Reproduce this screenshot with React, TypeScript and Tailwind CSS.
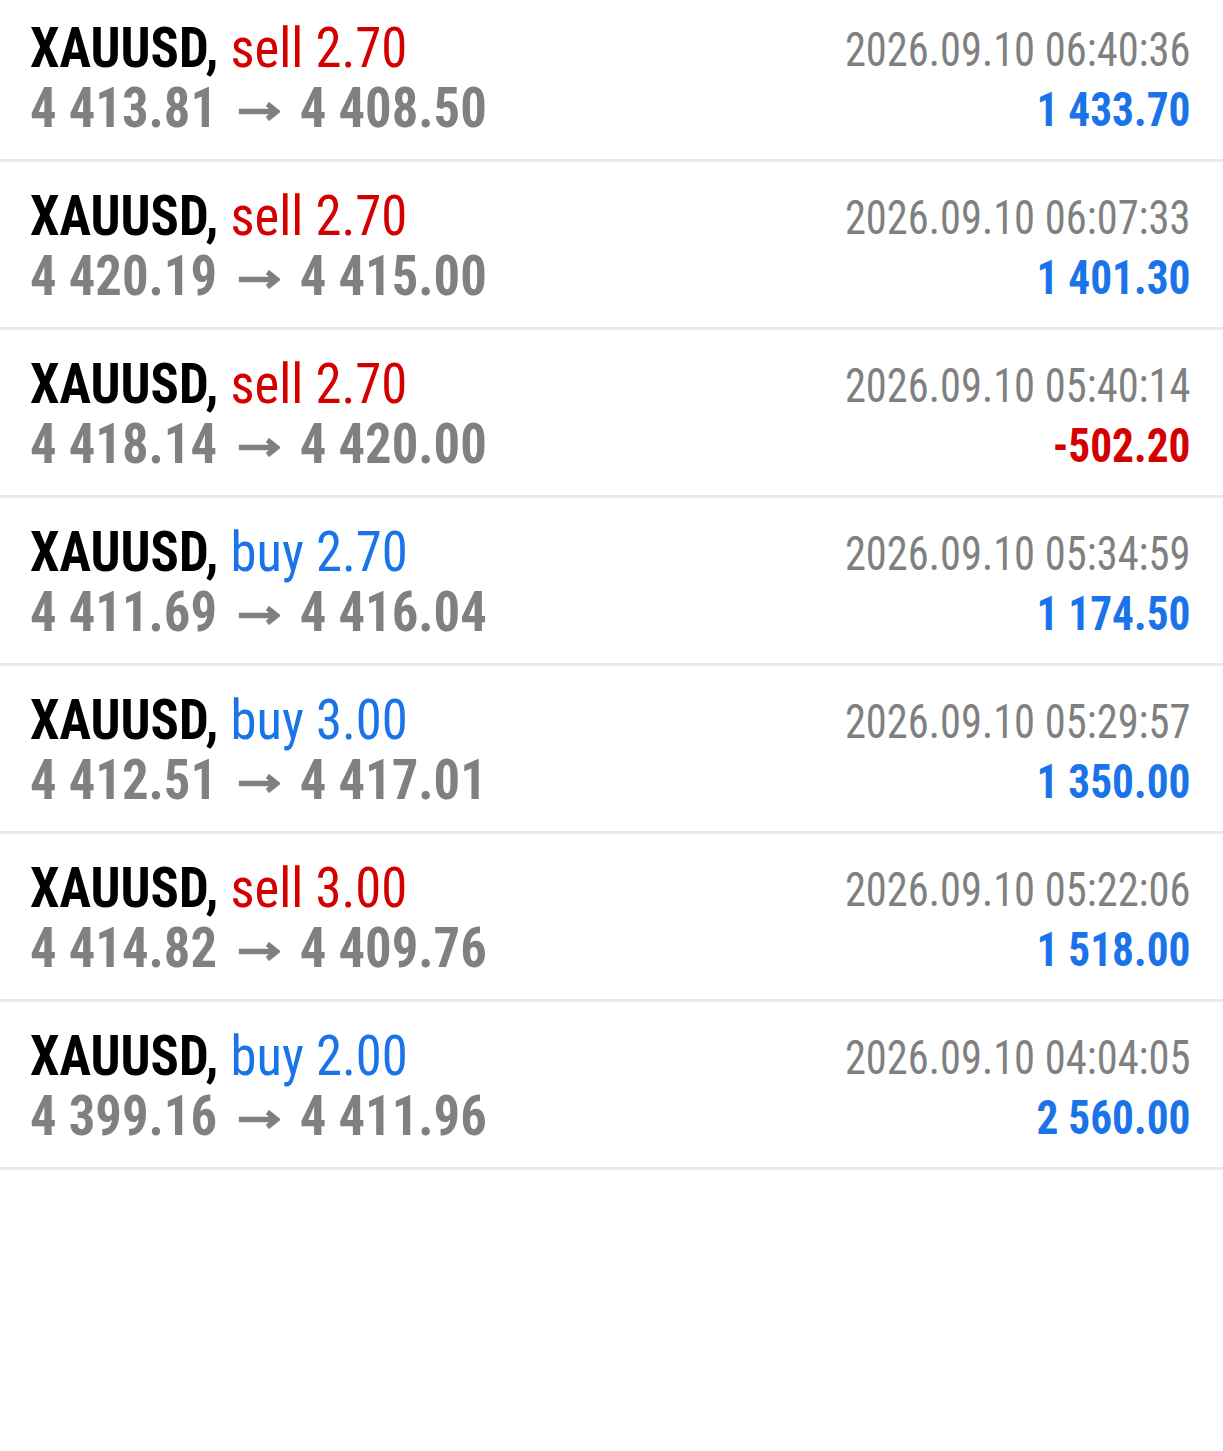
const trades = [
  { side: 'sell', vol: '2.70', open: '4 413.81', close: '4 408.50', time: '2026.09.10 06:40:36', profit: '1 433.70' },
  { side: 'sell', vol: '2.70', open: '4 420.19', close: '4 415.00', time: '2026.09.10 06:07:33', profit: '1 401.30' },
  { side: 'sell', vol: '2.70', open: '4 418.14', close: '4 420.00', time: '2026.09.10 05:40:14', profit: '-502.20' },
  { side: 'buy', vol: '2.70', open: '4 411.69', close: '4 416.04', time: '2026.09.10 05:34:59', profit: '1 174.50' },
  { side: 'buy', vol: '3.00', open: '4 412.51', close: '4 417.01', time: '2026.09.10 05:29:57', profit: '1 350.00' },
  { side: 'sell', vol: '3.00', open: '4 414.82', close: '4 409.76', time: '2026.09.10 05:22:06', profit: '1 518.00' },
  { side: 'buy', vol: '2.00', open: '4 399.16', close: '4 411.96', time: '2026.09.10 04:04:05', profit: '2 560.00' },
];

function Arrow() {
  return (
    <svg width="44" height="19" viewBox="0 0 44 19" className="ml-[23px] mr-[21px] mt-[6px] shrink-0" fill="none">
      <path d="M0 9.5H40.5M30.5 2L40.5 9.5L30.5 17" stroke="#808080" strokeWidth="5.5" />
    </svg>
  );
}

function TradeRow({ t }: { t: (typeof trades)[number] }) {
  const loss = t.profit.startsWith('-');
  return (
    <div className="flex h-[168px] items-start justify-between border-b-[3px] border-[#e8e8e8] pl-[30px] pr-[33px] pt-[24px]">
      {/* left: symbol / side, prices */}
      <div className="flex origin-left scale-x-[0.94] flex-col">
        <div className="whitespace-nowrap text-[56px] leading-[60px]">
          <span className="font-bold text-black">XAUUSD,</span>{' '}
          <span className={t.side === 'sell' ? 'text-[#d40000]' : 'text-[#1a73e8]'}>
            {t.side} {t.vol}
          </span>
        </div>
        <div className="flex items-center whitespace-nowrap text-[56px] font-bold leading-[60px] text-[#808080]">
          <span>{t.open}</span>
          <Arrow />
          <span>{t.close}</span>
        </div>
      </div>
      {/* right: time, profit */}
      <div className="flex origin-right scale-x-[0.885] flex-col items-end pt-[4px]">
        <div className="whitespace-nowrap text-[48px] leading-[56px] text-[#808080]">{t.time}</div>
        <div className={`whitespace-nowrap text-[49px] font-bold leading-[64px] ${loss ? 'text-[#d40000]' : 'text-[#1a73e8]'}`}>
          {t.profit}
        </div>
      </div>
    </div>
  );
}

export default function App() {
  return (
    <div className="min-h-[1451px] w-[1223px] overflow-hidden bg-white font-['Roboto_Condensed','Roboto',sans-serif]">
      <div className="mt-[-6px]">
        {trades.map((t, i) => (
          <TradeRow key={i} t={t} />
        ))}
      </div>
    </div>
  );
}
